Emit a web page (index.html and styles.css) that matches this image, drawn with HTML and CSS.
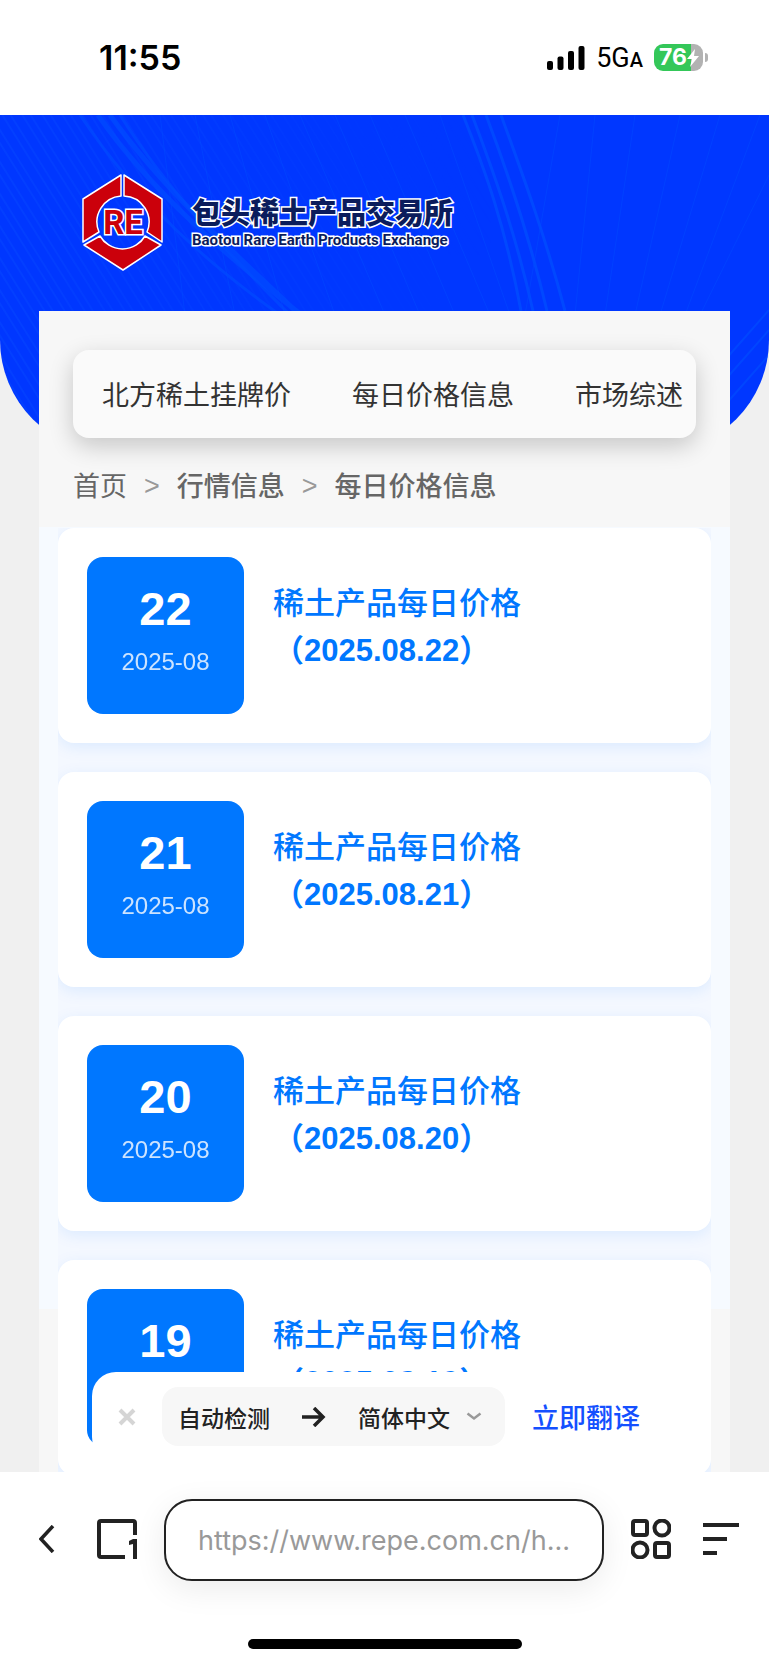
FILE: index.html
```html
<!DOCTYPE html>
<html lang="zh-CN">
<head>
<meta charset="utf-8">
<meta name="viewport" content="width=device-width, initial-scale=1">
<title>每日价格信息 - 包头稀土产品交易所</title>
<link rel="stylesheet" href="styles.css">
</head>
<body>
<div class="phone">
  <div class="status">
    <span class="clock">11:55</span>
    <div class="status-right">
      <svg class="signal" width="38" height="24" viewBox="0 0 38 24"><rect x="0" y="15" width="6" height="9" rx="2"/><rect x="10.500" y="10.500" width="6" height="13.500" rx="2"/><rect x="21" y="5" width="6" height="19" rx="2"/><rect x="31.500" y="0" width="6" height="24" rx="2"/></svg>
      <span class="network">5G<small>A</small></span>
      <span class="battery"><span class="level">76</span><svg width="12" height="18" viewBox="0 0 12 18"><path d="M8 0 0 10h5l-2 8 9-11H7z" fill="#fff"/></svg></span>
    </div>
  </div>

  <div class="site">
    <header class="banner">
      <svg class="banner-lines" viewBox="0 0 769 337" preserveAspectRatio="none" fill="none">
        <defs>
          <pattern id="weave" width="17" height="60" patternUnits="userSpaceOnUse" patternTransform="rotate(-32)"><path d="M2 0v60M9 0v60" stroke="#0d57ff" stroke-width="1.500"/></pattern>
          <linearGradient id="fade" x1="0" x2="1"><stop offset="0" stop-color="#fff"/><stop offset=".45" stop-color="#fff" stop-opacity=".25"/><stop offset=".65" stop-color="#fff" stop-opacity="0"/></linearGradient>
          <mask id="left"><rect width="769" height="337" fill="url(#fade)"/></mask>
        </defs>
        <rect width="769" height="337" fill="url(#weave)" opacity=".35" mask="url(#left)"/>
        <g stroke="#004cff">
          <path stroke-width="5" opacity=".7" d="M98 0C150 75 225 140 308 205M110 0C160 70 225 130 300 200"/>
          <path stroke-width="3" opacity=".6" d="M120 0C170 80 240 150 290 200M80 0C140 90 210 150 280 200"/>
          <path stroke-width="3" opacity=".8" d="M463 0C485 55 505 110 521 196M472 0C494 58 516 120 533 196M486 0C508 58 529 120 547 196M501 0C521 55 545 120 565 196"/>
          <path stroke-width="1" opacity=".5" d="M160 0 185 200M195 0 235 200M230 0 285 200M265 0 335 200M300 0 385 200M335 0 420 200M370 0 455 200M405 0 490 200M440 0 510 200M560 0 525 200M595 0 575 200M635 0 605 200M680 0 635 200M720 0 660 200M760 0 685 200M769 60 700 200"/>
          <path stroke-width="2" opacity=".7" d="M769 195 725 245M769 215 725 265M769 240 725 290M769 275 725 325"/>
        </g>
      </svg>
      <a class="brand" href="#">
        <svg width="84" height="98" viewBox="0 0 84 98">
          <g fill="#cb000b" stroke="#fff" stroke-width="1.500" stroke-linejoin="round">
            <path d="M40 1v21A26 26 0 0 0 18 58L2 68V25z"/>
            <path d="M43 1v21a26 26 0 0 1 23 36l15 10V25z"/>
            <path d="M3 71 19 62a26 26 0 0 0 45 0l16 9-38 25z"/>
          </g>
          <text class="logo-mark" x="42" y="60" text-anchor="middle">RE</text>
        </svg>
        <span class="brand-text"><span class="brand-cn">包头稀土产品交易所</span><span class="brand-en">Baotou Rare Earth Products Exchange</span></span>
      </a>
    </header>

    <main class="sheet">
      <nav class="tabs"><a href="#">北方稀土挂牌价</a><a href="#">每日价格信息</a><a href="#">市场综述</a></nav>
      <nav class="crumbs"><a href="#">首页</a><span>&gt;</span><a class="strong" href="#">行情信息</a><span>&gt;</span><a class="strong" href="#">每日价格信息</a></nav>
      <div class="backdrop">
        <div class="list">
          <article class="card"><time class="date" datetime="2025-08-22"><b>22</b><span>2025-08</span></time><h2><a href="#">稀土产品每日价格<b>（2025.08.22）</b></a></h2></article>
          <article class="card"><time class="date" datetime="2025-08-21"><b>21</b><span>2025-08</span></time><h2><a href="#">稀土产品每日价格<b>（2025.08.21）</b></a></h2></article>
          <article class="card"><time class="date" datetime="2025-08-20"><b>20</b><span>2025-08</span></time><h2><a href="#">稀土产品每日价格<b>（2025.08.20）</b></a></h2></article>
          <article class="card"><time class="date" datetime="2025-08-19"><b>19</b><span>2025-08</span></time><h2><a href="#">稀土产品每日价格<b>（2025.08.19）</b></a></h2></article>
        </div>
      </div>
    </main>
  </div>

  <footer class="dock">
    <div class="translate">
      <button class="close" aria-label="关闭"><svg width="18" height="18" viewBox="0 0 18 18"><path d="m2 2 14 14M16 2 2 16" stroke="#d5d5d5" stroke-width="4"/></svg></button>
      <div class="langs">
        <button>自动检测</button>
        <svg width="24" height="20" viewBox="0 0 24 20" fill="none" stroke="#222" stroke-width="3.500"><path d="M0 10h21M12 1l9 9-9 9"/></svg>
        <button class="target">简体中文<svg width="16" height="9" viewBox="0 0 16 9" fill="none" stroke="#999" stroke-width="2.500"><path d="m1.500 1.500 6.500 5 6.500-5"/></svg></button>
      </div>
      <button class="go">立即翻译</button>
    </div>
    <div class="toolbar">
      <button aria-label="返回"><svg width="16" height="28" viewBox="0 0 16 28" fill="none" stroke="#222" stroke-width="3.500"><path d="M14 1 2 14l12 13"/></svg></button>
      <button class="pages" aria-label="标签页"><svg width="40" height="40" viewBox="0 0 40 40" fill="none" stroke="#222" stroke-width="4"><path d="M28 38H4a2 2 0 0 1-2-2V4a2 2 0 0 1 2-2h32a2 2 0 0 1 2 2v12"/><path d="M40 20v20h-4V25l-4 1v-4l4-2z" fill="#222" stroke="none"/></svg></button>
      <input class="url" type="text" aria-label="网址" value="https://www.repe.com.cn/h..." readonly>
      <button aria-label="应用"><svg width="40" height="40" viewBox="0 0 40 40" fill="none" stroke="#222" stroke-width="4"><rect x="2" y="2" width="14" height="14" rx="2"/><circle cx="31" cy="9" r="7.500"/><circle cx="9" cy="31" r="7.500"/><rect x="24" y="24" width="14" height="14" rx="2"/></svg></button>
      <button class="menu" aria-label="菜单"><svg width="36" height="32" viewBox="0 0 36 32" fill="#222"><path d="M0 0h36v4H0zM0 14h24v4H0zM0 28h14v4H0z"/></svg></button>
    </div>
    <div class="home"></div>
  </footer>
</div>
</body>
</html>
```
FILE: styles.css
```css
* { box-sizing: border-box; }
body { margin: 0; background: #fff; font-family: "Liberation Sans", "Noto Sans CJK SC", sans-serif; color: #333; }
a { color: inherit; text-decoration: none; }
button { border: 0; padding: 0; background: none; font: inherit; color: inherit; display: flex; align-items: center; }
svg { display: block; flex: none; }
.phone { min-height: 100vh; display: flex; flex-direction: column; }

.status { height: 115px; flex: none; padding: 0 62px 0 99px; display: flex; align-items: center; justify-content: space-between; font-family: Inter, sans-serif; color: #000; }
.clock { font-size: 34px; font-weight: 600; }
.status-right { display: flex; align-items: center; gap: 11px; }
.network { font: 400 27px/32px Roboto, sans-serif; padding-top: 3px; }
.network small { font-size: 20px; font-weight: 500; }
.battery { position: relative; width: 49px; height: 27px; border-radius: 9px; background: linear-gradient(90deg, #34c759 76%, #b2b2b2 76%); display: flex; align-items: center; padding-left: 5px; color: #fff; margin-right: 4px; }
.battery::after { content: ""; position: absolute; left: 51px; top: 9px; width: 3px; height: 9px; border-radius: 0 4px 4px 0; background: #b2b2b2; }
.level { font-size: 23px; line-height: 27px; font-weight: 700; }

.site { flex: 1 1 0; min-height: 0; overflow: hidden; position: relative; background: #f0f0f0; }
.banner { height: 337px; background: #0037ff; border-radius: 0 0 112px 112px; overflow: hidden; position: relative; padding: 59px 81px; }
.banner-lines { position: absolute; inset: 0; width: 100%; height: 100%; }
.brand { position: relative; display: flex; align-items: center; gap: 27px; }
.logo-mark { font: 700 33px Roboto, sans-serif; fill: #cb000b; stroke: #fff; stroke-width: 3px; paint-order: stroke; }
.brand-text { display: flex; flex-direction: column; color: #0b1c5c; -webkit-text-stroke: 3px #fff; paint-order: stroke fill; white-space: nowrap; }
.brand-cn { font: 900 29px/34px "Noto Sans CJK SC", sans-serif; }
.brand-en { font: 700 15px/24px Roboto, sans-serif; }

.sheet { position: relative; margin: -141px 39px 0; padding-top: 39px; background: #f7f7f7; }
.tabs { margin: 0 34px; height: 88px; padding: 0 0 2px 29px; display: flex; align-items: center; gap: 61px; border-radius: 16px; background: #fafafa; box-shadow: 0 8px 24px rgba(0, 0, 0, .2); font-size: 27px; white-space: nowrap; overflow: hidden; }
.crumbs { margin: 0 34px; height: 89px; padding-top: 4px; display: flex; align-items: center; gap: 17px; font-size: 27px; color: #666; white-space: nowrap; }
.crumbs span { color: #999; padding-top: 4px; }
.strong { font-weight: 500; }
.backdrop { padding: 1px 19px 0; background: linear-gradient(#f6faff 782px, #f7f7f7 782px); }
.list { display: flex; flex-direction: column; gap: 29px; background: #f4f8ff; overflow: hidden; }
.card { display: flex; gap: 29px; padding: 29px; border-radius: 16px; background: #fff; box-shadow: 0 4px 16px rgba(0, 119, 255, .1); }
.date { flex: none; width: 157px; height: 157px; border-radius: 16px; background: #0077ff; color: #fff; display: flex; flex-direction: column; align-items: center; padding-top: 25px; }
.date b { font-size: 47px; line-height: 54px; }
.date span { font-size: 24px; line-height: 28px; margin-top: 12px; opacity: .8; }
.card h2 { margin: 23px 0 0; font-size: 31px; line-height: 47px; font-weight: 500; color: #0077ff; }
.card h2 b { display: block; }

.dock { position: relative; height: 193px; flex: none; background: #fff; padding-top: 27px; font-family: "Noto Sans CJK SC", sans-serif; }
.translate { position: absolute; left: 92px; right: 92px; bottom: 204px; height: 89px; border-radius: 24px; background: #fff; display: flex; align-items: center; padding-left: 26px; color: #222; }
.langs { width: 343px; height: 59px; margin: 0 27px 0 26px; padding: 0 16px; border-radius: 16px; background: #f7f7f7; display: flex; align-items: center; gap: 32px; font-size: 23px; font-weight: 500; white-space: nowrap; }
.target { gap: 16px; }
.go { font-size: 27px; font-weight: 500; color: #1450ff; }
.toolbar { display: flex; align-items: center; padding: 0 30px 0 39px; height: 82px; }
.toolbar button { padding-bottom: 3px; }
.pages { margin: 0 27px 0 42px; }
.url { flex: 1; min-width: 0; height: 82px; margin-right: 27px; padding: 0 0 0 32px; border: 2px solid #222; border-radius: 28px; background: #fff; box-shadow: 0 8px 32px rgba(0, 0, 0, .08); font: 400 27px Inter, sans-serif; color: #999; outline: 0; }
.menu { margin-left: 32px; }
.home { width: 274px; height: 10px; margin: 58px auto 0; border-radius: 5px; background: #000; }
```
